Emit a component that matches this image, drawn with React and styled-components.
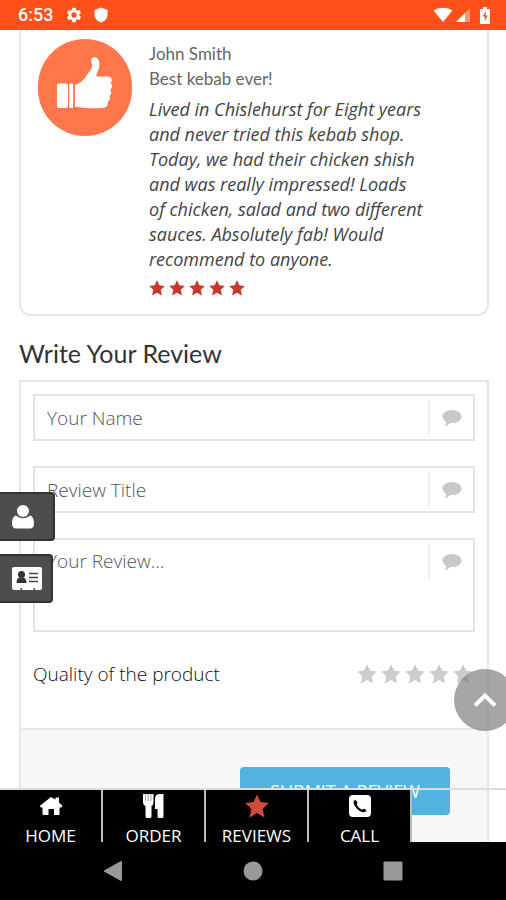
import React, { useState } from "react";
import styled, { createGlobalStyle } from "styled-components";
import { MdSettings } from "react-icons/md";

const RATINGS = [1, 2, 3, 4, 5];

const tabs = [
    { label: "HOME", icon: "home", href: "#home" },
    { label: "ORDER", icon: "order", href: "#order" },
    { label: "REVIEWS", icon: "star", href: "#reviews", active: true },
    { label: "CALL", icon: "call", href: "#call" },
];

const StarIcon = ({ size }) => (
    <svg width={size} height={size} viewBox="0 0 20 20" fill="currentColor" aria-hidden="true">
        <path d="M10 .4 12.900 6.600l6.900.8-5.100 4.800 1.500 7.300L10 15.900l-6.200 3.600 1.500-7.300L.2 7.400l6.900-.8z" />
    </svg>
);

const BubbleIcon = () => (
    <svg width="20" height="18" viewBox="0 0 20 18" fill="currentColor" aria-hidden="true">
        <path d="M10 1c5.300 0 9.500 2.900 9.500 6.600S15.300 14.200 10 14.200c-.7 0-1.300 0-1.900-.1-1.500 1.600-3.500 2.700-5.600 3 .9-1.200 1.700-2.400 1.700-4.200C2 11.700.5 9.800.5 7.600.5 3.900 4.700 1 10 1z" />
    </svg>
);

const ThumbIcon = () => (
    <svg width="56" height="54" viewBox="0 0 56 54" fill="currentColor" aria-hidden="true">
        <rect x="0" y="27.500" width="11" height="24.500" rx="2" />
        <rect x="12.200" y="27.500" width="4" height="24.500" rx="1" />
        <path d="M18 29c5.500-1.500 8.500-5 11.500-9.500 2.500-3.500 5.500-6 5.500-10 0-2.500-1.500-4.500-.5-6.500 1-2.200 4.500-2.500 6.200-.3 2.500 3.300 2 8.300.3 12.300-.9 2.200-2 4-1.500 5.500h11.500c4 0 5 4.500 2.500 6.500 2.500 1.700 2.200 5.300-.4 6.700 1.900 2 1.500 5-.9 6.400 1.500 2 .9 4.800-1.400 5.900.6 3.500-1.400 5.700-5.300 6-8.500.6-17 .3-22.500-.7-1.800-.3-3.300-.3-5-.3z" />
    </svg>
);

const HomeIcon = () => (
    <svg width="24" height="20" viewBox="0 0 24 20" fill="currentColor" aria-hidden="true">
        <path d="M12 1 16.500 3.500V1.500H20v5L23.500 10 22 11.500h-1.500V18q0 1-1 1H15v-6H9.500v6H4.500q-1 0-1-1v-6.500H2L.7 10z" />
    </svg>
);

const OrderIcon = () => (
    <svg width="22" height="26" viewBox="0 0 22 26" fill="currentColor" aria-hidden="true">
        <path d="M0 1h10.500v8.500Q10.500 12 8.500 13v10.500Q8.500 25 7 25H4q-1.500 0-1.500-1.500V13Q0 12 0 9.500z" />
        <path d="M20.500 1v22.500q0 1.500-1.500 1.500h-3q-1.500 0-1.500-1.500V16H12V6q0-5 5-5z" />
        <path d="M2.600 1v7M5.200 1v7M7.900 1v7" stroke="#777" strokeWidth=".7" />
    </svg>
);

const CallIcon = () => (
    <svg width="24" height="24" viewBox="0 0 24 24" aria-hidden="true">
        <rect x="1" y="1" width="22" height="22" rx="4" fill="currentColor" />
        <path d="M7.200 5.800C5.300 7 5.200 9 6.500 11.500c1.900 3.300 4.300 5.200 7.500 6.500 2 .7 3.800 0 4.500-2l-2.700-1.300-1.700 1.100c-2.500-1-4.500-3-5.400-5.500l1-1.700z" fill="#000" />
    </svg>
);

const UserIcon = () => (
    <svg width="24" height="26" viewBox="0 0 24 26" fill="currentColor" aria-hidden="true">
        <path d="M5 11.500C2.300 12 1 15.500 1 19.500 1 22.800 2.500 24.500 5 24.500h14c2.500 0 4-1.700 4-5 0-4-1.300-7.500-4-8-4 3.500-10 3.500-14 0z" />
        <circle cx="12" cy="7" r="6" />
    </svg>
);

const CardIcon = () => (
    <svg width="32" height="26" viewBox="0 0 32 26" aria-hidden="true">
        <path d="M3 1h26q2 0 2 2v19q0 2-2 2h-5v-2h-1.500v2H11v-2H9.500v2H3q-2 0-2-2V3q0-2 2-2z" fill="currentColor" />
        <circle cx="10.500" cy="8.500" r="3.500" fill="#333" />
        <path d="M5.500 17c0-3.500 1.500-5 3-5.500 1.300 1 2.700 1 4 0 1.500.5 3 2 3 5.500z" fill="#333" />
        <path d="M18 7.500h9M18 11.500h9M18 15.500h9" stroke="#444" strokeWidth="1.500" />
    </svg>
);

const icons = {
    home: <HomeIcon />,
    order: <OrderIcon />,
    star: <StarIcon size={24} />,
    call: <CallIcon />,
};

const App = () => {
    const [rating, setRating] = useState(0);

    return (
        <>
            <GlobalStyle />
            <Screen>
                <StatusBar>
                    <Time>6:53</Time>
                    <MdSettings size={18} />
                    <svg width="14" height="16" viewBox="0 0 14 16" fill="#fff">
                        <path d="M7 .5 13.500 3v4.500c0 4-2.700 6.800-6.500 8-3.800-1.200-6.500-4-6.500-8V3z" />
                    </svg>
                    <StatusRight>
                        <svg width="20" height="16" viewBox="0 0 20 16" fill="#fff">
                            <path d="M.5 3.500C6-.3 14-.3 19.500 3.500L10 15z" />
                        </svg>
                        <svg width="16" height="16" viewBox="0 0 16 16" fill="#fff">
                            <path d="M15 1v14H1z" opacity=".4" />
                            <path d="M10 6v9H1z" />
                        </svg>
                        <Battery width="10" height="17" viewBox="0 0 10 17">
                            <path d="M3 0h4v2h2q1 0 1 1v13q0 1-1 1H1q-1 0-1-1V3q0-1 1-1h2z" fill="#fff" />
                            <path d="M6 4 2.500 9.500h2.300V14L7.800 8.500H5.500z" fill="#ff5019" />
                        </Battery>
                    </StatusRight>
                </StatusBar>

                <Main>
                    <ReviewCard>
                        <Avatar>
                            <ThumbIcon />
                        </Avatar>
                        <ReviewBody>
                            <Meta>John Smith</Meta>
                            <Meta>Best kebab ever!</Meta>
                            <Quote>
                                Lived in Chislehurst for Eight years and never tried this kebab shop.
                                Today, we had their chicken shish and was really impressed! Loads
                                of chicken, salad and two different sauces. Absolutely fab! Would
                                recommend to anyone.
                            </Quote>
                            <Stars role="img" aria-label="5 out of 5">
                                {RATINGS.map((n) => (
                                    <StarIcon key={n} size={16} />
                                ))}
                            </Stars>
                        </ReviewBody>
                    </ReviewCard>

                    <Title>Write Your Review</Title>

                    <Form onSubmit={(e) => e.preventDefault()}>
                        <Fields>
                            <Field>
                                <Input type="text" placeholder="Your Name" aria-label="Your Name" />
                                <FieldIcon>
                                    <BubbleIcon />
                                </FieldIcon>
                            </Field>
                            <Field>
                                <Input type="text" placeholder="Review Title" aria-label="Review Title" />
                                <FieldIcon>
                                    <BubbleIcon />
                                </FieldIcon>
                            </Field>
                            <Field>
                                <TextArea placeholder="Your Review..." aria-label="Your Review" />
                                <FieldIcon>
                                    <BubbleIcon />
                                </FieldIcon>
                            </Field>
                            <Quality role="radiogroup" aria-labelledby="quality">
                                <span id="quality">Quality of the product</span>
                                <RatingStars>
                                    {RATINGS.map((n) => (
                                        <RatingStar key={n} $on={n <= rating}>
                                            <input
                                                type="radio"
                                                name="quality"
                                                value={n}
                                                aria-label={`${n} stars`}
                                                checked={rating === n}
                                                onChange={() => setRating(n)}
                                            />
                                            <StarIcon size={20} />
                                        </RatingStar>
                                    ))}
                                </RatingStars>
                            </Quality>
                        </Fields>
                        <FormFooter>
                            <Submit type="submit">SUBMIT A REVIEW</Submit>
                        </FormFooter>
                    </Form>

                    <SideTabs>
                        <SideTab type="button" aria-label="Account" $width={55}>
                            <UserIcon />
                        </SideTab>
                        <SideTab type="button" aria-label="Contact" $width={53}>
                            <CardIcon />
                        </SideTab>
                    </SideTabs>

                    <ToTop type="button" aria-label="Back to top">
                        <svg width="24" height="16" viewBox="0 0 24 16" fill="none" stroke="#fff" strokeWidth="4">
                            <path d="M2 13.500 12 3.500l10 10" />
                        </svg>
                    </ToTop>

                    <TabBar>
                        {tabs.map((tab) => (
                            <Tab key={tab.label} href={tab.href}>
                                <TabIcon $active={tab.active}>{icons[tab.icon]}</TabIcon>
                                {tab.label}
                            </Tab>
                        ))}
                    </TabBar>
                </Main>

                <SystemNav>
                    <SystemButton type="button" aria-label="Back">
                        <svg width="20" height="22" viewBox="0 0 20 22" fill="#999">
                            <path d="M18 1q1 0 1 1v18q0 1-1 1L1 11.500v-1z" />
                        </svg>
                    </SystemButton>
                    <SystemButton type="button" aria-label="Home">
                        <svg width="20" height="20" viewBox="0 0 20 20" fill="#999">
                            <circle cx="10" cy="10" r="9.500" />
                        </svg>
                    </SystemButton>
                    <SystemButton type="button" aria-label="Recent apps">
                        <svg width="20" height="20" viewBox="0 0 20 20" fill="#999">
                            <rect x=".5" y=".5" width="19" height="19" rx="1" />
                        </svg>
                    </SystemButton>
                </SystemNav>
            </Screen>
        </>
    );
};

const GlobalStyle = createGlobalStyle`
    * {
        box-sizing: border-box;
    }
    body {
        margin: 0;
        background: #fff;
        color: #333;
        font-family: "Open Sans", sans-serif;
    }
    svg {
        display: block;
        flex-shrink: 0;
    }
    button {
        border: 0;
        padding: 0;
        cursor: pointer;
    }
`;

const Screen = styled.div`
    display: flex;
    flex-direction: column;
    height: 100vh;
    overflow: hidden;
`;

const StatusBar = styled.header`
    display: flex;
    align-items: center;
    flex: 0 0 30px;
    padding: 0 16px 0 18px;
    background: #ff5019;
    color: #fff;
`;

const Time = styled.span`
    margin-right: 12px;
    font: 500 18px/30px Roboto, sans-serif;

    & + svg {
        margin-right: 11px;
    }
`;

const StatusRight = styled.div`
    display: flex;
    align-items: center;
    gap: 2px;
    margin-left: auto;
`;

const Battery = styled.svg`
    margin-left: 7px;
`;

const Main = styled.main`
    position: relative;
    flex: 1;
    min-height: 0;
    padding: 0 17px 0 19px;
    overflow: hidden;
`;

const ReviewCard = styled.article`
    display: flex;
    gap: 17px;
    padding: 9px 62px 18px 17px;
    border: 2px solid #e6e6e6;
    border-top: 0;
    border-radius: 0 0 11px 11px;
`;

const Avatar = styled.div`
    display: flex;
    align-items: center;
    justify-content: center;
    flex: 0 0 94px;
    height: 97px;
    padding-bottom: 10px;
    border-radius: 48px;
    background: #ff764b;
    color: #fff;
`;

const ReviewBody = styled.div`
    flex: 1;
    min-width: 0;
    padding-top: 2px;
`;

const Meta = styled.p`
    margin: 0;
    color: #666;
    font: 17px/25px Lato, sans-serif;
`;

const Quote = styled.p`
    margin: 6px 0 8px;
    color: #444;
    font-size: 18px;
    font-style: italic;
    line-height: 25px;
`;

const Stars = styled.div`
    display: flex;
    gap: 4px;
    color: #c9372c;
`;

const Title = styled.h2`
    margin: 21px 0 11px;
    color: #333;
    font: 400 25px/32px Lato, sans-serif;
`;

const Form = styled.form`
    border: 2px solid #e6e6e6;
`;

const Fields = styled.div`
    display: flex;
    flex-direction: column;
    gap: 25px;
    padding: 12px 12px 39px;
`;

const Field = styled.div`
    display: flex;
    border: 2px solid #e3e3e3;
`;

const Input = styled.input`
    flex: 1;
    min-width: 0;
    height: 43px;
    padding: 0 12px;
    border: 0;
    background: none;
    color: #444;
    font: 300 19px/25px "Open Sans", sans-serif;
    outline: none;

    &::placeholder {
        color: #555;
        opacity: 1;
    }
`;

const TextArea = styled(Input).attrs({ as: "textarea" })`
    height: 90px;
    padding: 9px 12px;
    resize: none;
`;

const FieldIcon = styled.span`
    display: flex;
    align-items: center;
    justify-content: center;
    width: 45px;
    height: 36px;
    margin-top: 4px;
    border-left: 2px solid #f0f0f0;
    color: #c8c8c8;
`;

const Quality = styled.div`
    display: flex;
    align-items: center;
    justify-content: space-between;
    margin-top: 2px;
    color: #111;
    font-size: 19px;
    font-weight: 300;
    line-height: 30px;
`;

const RatingStars = styled.div`
    display: flex;
    gap: 4px;
    margin-right: 2px;
`;

const RatingStar = styled.label`
    color: ${(props) => (props.$on ? "#c9372c" : "#ccc")};
    cursor: pointer;

    input {
        position: absolute;
        opacity: 0;
        pointer-events: none;
    }
`;

const FormFooter = styled.div`
    display: flex;
    justify-content: flex-end;
    padding: 37px 37px 60px;
    border-top: 2px solid #e8e8e8;
    background: #f7f7f7;
`;

const Submit = styled.button`
    height: 48px;
    padding: 0 30px;
    border-radius: 4px;
    background: #52b3e0;
    color: #fff;
    font: 400 18px/24px "Open Sans", sans-serif;
`;

const SideTabs = styled.div`
    position: absolute;
    left: 0;
    bottom: 239px;
    display: flex;
    flex-direction: column;
    gap: 13px;
`;

const SideTab = styled.button`
    display: flex;
    align-items: center;
    width: ${(props) => props.$width}px;
    height: 49px;
    padding-left: 11px;
    border: 2px solid #333;
    border-left: 0;
    border-radius: 0 4px 4px 0;
    background: #4d4d4d;
    color: #fff;
`;

const ToTop = styled.button`
    position: absolute;
    right: -10px;
    bottom: 111px;
    display: flex;
    align-items: center;
    justify-content: center;
    width: 62px;
    height: 62px;
    border-radius: 50%;
    background: rgba(128, 128, 128, 0.7);
`;

const TabBar = styled.nav`
    position: absolute;
    left: 0;
    right: 0;
    bottom: 0;
    display: flex;
    height: 54px;
    border-top: 2px solid #ddd;
    overflow: hidden;
`;

const Tab = styled.a`
    display: flex;
    flex-direction: column;
    align-items: center;
    flex: 0 0 103px;
    height: 60px;
    border-right: 2px solid #bbb;
    background: #000;
    color: #fff;
    font-size: 17px;
    line-height: 24px;
    text-decoration: none;
`;

const TabIcon = styled.span`
    display: flex;
    align-items: center;
    height: 31px;
    margin-bottom: 3px;
    color: ${(props) => (props.$active ? "#d24a3e" : "#fff")};
`;

const SystemNav = styled.footer`
    display: flex;
    align-items: center;
    justify-content: center;
    gap: 80px;
    flex: 0 0 58px;
    background: #000;
`;

const SystemButton = styled.button`
    display: flex;
    justify-content: center;
    width: 60px;
    background: none;
`;

export default App;
